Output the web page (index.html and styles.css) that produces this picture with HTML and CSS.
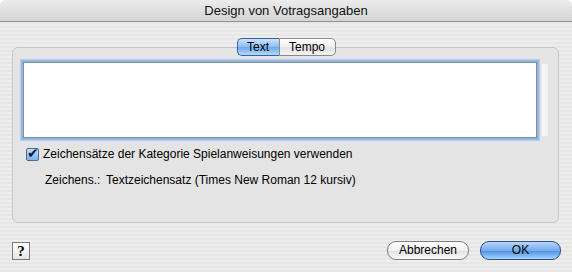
FILE: index.html
```html
<!DOCTYPE html>
<html>
<head>
  <meta charset="utf-8" />
  <title>Design von Votragsangaben</title>
<link rel="stylesheet" href="styles.css">
</head>
<body>
<div class="window">
  <div class="titlebar">Design von Votragsangaben</div>
  <div class="body">
    <div class="group">
      <div class="tabs">
        <span class="tab active">Text</span><span class="tab">Tempo</span>
      </div>
      <div class="editrow">
        <div class="edit"></div>
        <div class="scroll"></div>
      </div>
      <label class="check">
        <span class="box">&#10004;</span>
        Zeichensätze der Kategorie Spielanweisungen verwenden
      </label>
      <div class="fontrow">
        <span class="key">Zeichens.:</span>
        <span>Textzeichensatz (Times New Roman 12 kursiv)</span>
      </div>
    </div>
    <div class="footer">
      <span class="help">?</span>
      <div class="buttons">
        <span class="btn">Abbrechen</span>
        <span class="btn default">OK</span>
      </div>
    </div>
  </div>
</div>
</body>
</html>
```

FILE: styles.css
```css
* {
  margin: 0;
  padding: 0;
  box-sizing: border-box;
}
body {
  width: 572px;
  height: 272px;
  overflow: hidden;
  font-family: "Liberation Sans", Arial, sans-serif;
  font-size: 12px;
  color: #000;
  background: #fff;
}
div.window {
  width: 572px;
  height: 272px;
  border-radius: 6px 6px 0 0;
  overflow: hidden;
  background: repeating-linear-gradient(#ededed 0, #ededed 2px, #e6e6e6 2px, #e6e6e6 4px);
}
div.titlebar {
  height: 22px;
  line-height: 21px;
  text-align: center;
  font-size: 13px;
  color: #111;
  background: linear-gradient(#ececec, #d4d4d4);
  border-bottom: 1px solid #8f8f8f;
}
div.body {
  padding: 25px 12px 0 12px;
}
div.group {
  height: 176px;
  margin-right: 1px;
  border: 1px solid #c6c6c6;
  border-radius: 6px;
  background: #e4e4e4;
  padding: 0 10px;
}
div.tabs {
  display: flex;
  justify-content: center;
  margin-top: -10px;
  margin-left: 1px;
}
span.tab {
  height: 18px;
  line-height: 16px;
  padding: 0 6px;
  border: 1px solid #8a8a8a;
  background: linear-gradient(#ffffff, #eeeeee 50%, #e2e2e2 51%, #f4f4f4);
  font-size: 12px;
}
span.tab:first-child {
  border-radius: 5px 0 0 5px;
  border-right: none;
  width: 42px;
  text-align: center;
}
span.tab:last-child {
  border-radius: 0 5px 5px 0;
  width: 57px;
  text-align: center;
}
span.tab.active {
  border-color: #3b5fa5;
  background: linear-gradient(#cfe3fb, #8bbcf2 50%, #6aa8ee 51%, #b3dafc);
}
div.editrow {
  display: flex;
  margin-top: 6px;
  gap: 5px;
}
div.edit {
  width: 515px;
  height: 76px;
  background: #fff;
  border: 1px solid #8c8c8c;
  box-shadow: 0 0 0 2px #8eb7e2, 0 0 1px 3px #b9d3ef;
}
div.scroll {
  width: 6px;
  height: 72px;
  margin-top: 2px;
  background: linear-gradient(90deg, #f9f9f9, #f0f0f0);
}
label.check {
  display: flex;
  align-items: center;
  gap: 4px;
  margin-top: 9px;
  margin-left: 3px;
  height: 14px;
}
span.box {
  width: 13px;
  height: 13px;
  border: 1px solid #4b6a9c;
  border-radius: 2px;
  background: linear-gradient(#c4dcf8, #7fb2ec);
  font-size: 14px;
  line-height: 9px;
  color: #0a1a3a;
  text-indent: 0;
  overflow: visible;
}
div.fontrow {
  margin-top: 12px;
  margin-left: 22px;
  display: flex;
}
span.key {
  width: 61px;
}
div.footer {
  display: flex;
  justify-content: space-between;
  align-items: center;
  margin-top: 18px;
}
span.help {
  width: 18px;
  height: 18px;
  border: 1px solid #7a7a7a;
  background: linear-gradient(#ffffff, #e6e6e6);
  font-family: "Liberation Serif", serif;
  font-weight: bold;
  font-size: 15px;
  line-height: 16px;
  text-align: center;
}
div.buttons {
  display: flex;
  gap: 11px;
  margin-right: -1px;
}
span.btn {
  width: 82px;
  height: 19px;
  line-height: 17px;
  text-align: center;
  border: 1px solid #7e7e7e;
  border-radius: 9px;
  background: linear-gradient(#ffffff, #f0f0f0 50%, #e0e0e0 51%, #fafafa);
}
span.btn.default {
  width: 81px;
  border-color: #2f4f8e;
  background: linear-gradient(#b9d8f8, #75acec 50%, #4b8fe3 51%, #a8d6fb);
}
```
